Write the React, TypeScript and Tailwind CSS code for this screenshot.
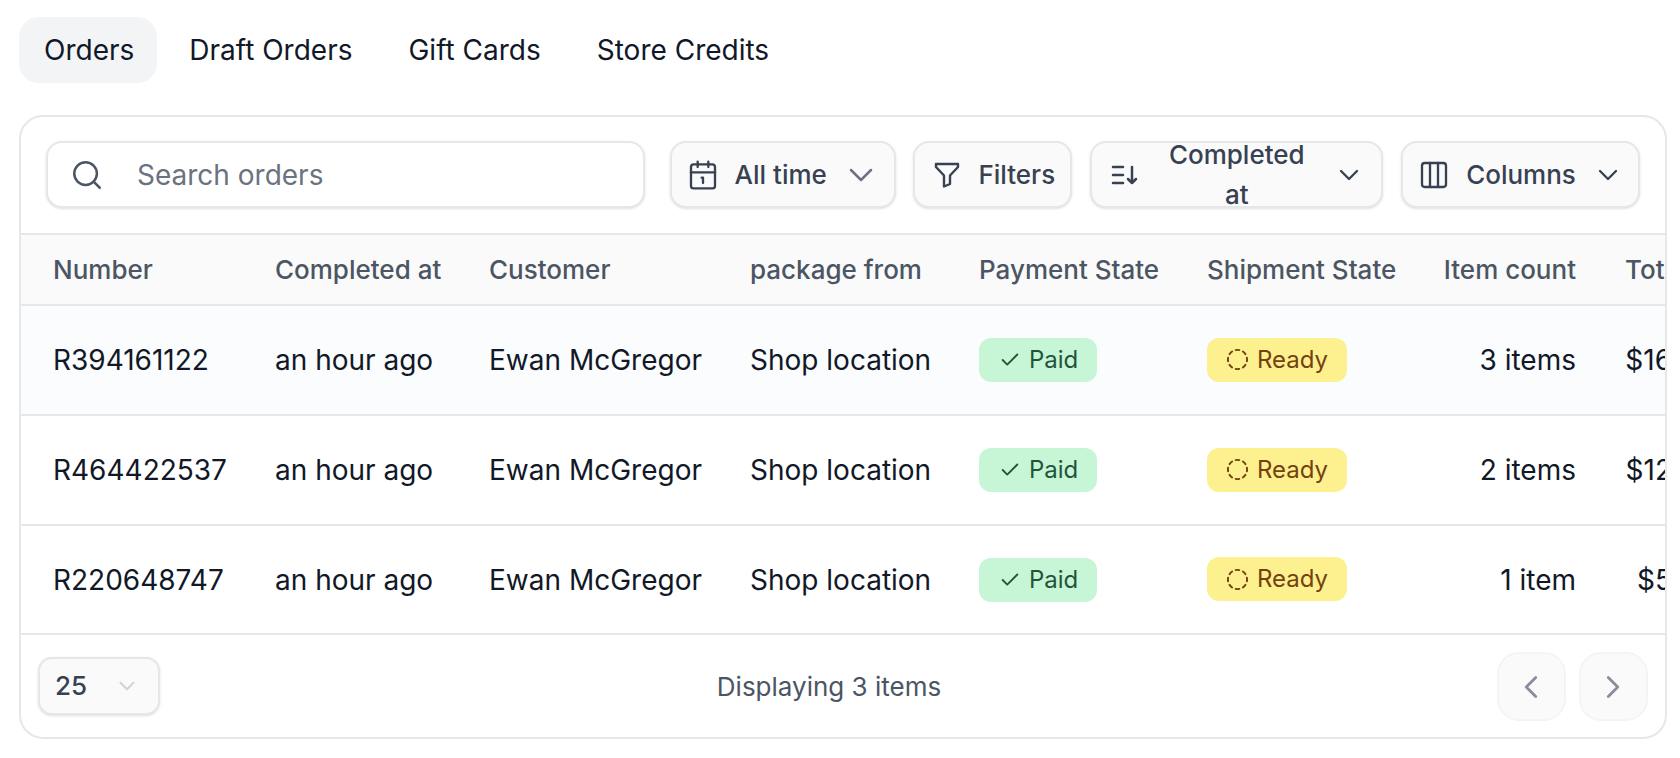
import { Calendar1, Check, ChevronDown, ChevronLeft, ChevronRight, CircleDashed, Columns3, Search } from "lucide-react";

const rows = [
  { number: "R394161122", count: "3 items", total: "$165.00", highlight: true },
  { number: "R464422537", count: "2 items", total: "$125.00", highlight: false },
  { number: "R220648747", count: "1 item", total: "$55.00", highlight: false },
];

const SortIcon = () => (
  <svg viewBox="0 0 30 30" fill="none" stroke="currentColor" strokeWidth="2.5" strokeLinecap="round" strokeLinejoin="round" className="h-[30px] w-[30px] shrink-0">
    <path d="M3 7h10M3 15h10M3 23h10M22 7v16M18 19l4 4 4-4" />
  </svg>
);

const FunnelIcon = () => (
  <svg viewBox="0 0 26 26" fill="none" stroke="currentColor" strokeWidth="2.4" strokeLinecap="round" strokeLinejoin="round" className="h-[26px] w-[26px] shrink-0">
    <path d="M2 2h22v3l-8 8.5V22l-6 2.5v-11L2 5z" />
  </svg>
);

export default function App() {
  return (
    <div className="h-[758px] overflow-hidden bg-white pl-[19px] pr-[13px] pt-[17px] font-['Inter',sans-serif] text-[26px] text-[#111827]">
      {/* Tabs */}
      <nav className="flex h-[66px] items-center text-[28px]">
        <a className="flex h-full items-center rounded-[20px] bg-[#f3f4f6] pl-[25px] pr-[23px]">Orders</a>
        <a className="ml-[4px] flex h-full items-center px-[28px]">Draft Orders</a>
        <a className="flex h-full items-center px-[28px]">Gift Cards</a>
        <a className="flex h-full items-center px-[28px]">Store Credits</a>
      </nav>

      <div className="mt-[32px] h-[624px] overflow-hidden rounded-[24px] border-2 border-[#e5e7eb]">
        {/* Toolbar */}
        <div className="flex h-[116px] items-center px-[25px] pb-[1px] text-[#374151]">
          <div className="flex h-[67px] w-[599px] items-center rounded-[16px] border-2 border-[#e5e7eb] bg-white pl-[22px] text-[28px] shadow-sm">
            <Search className="h-[34px] w-[34px] text-[#4b5563]" strokeWidth={1.75} />
            <span className="ml-[33px] text-[#6b7280]">Search orders</span>
          </div>
          <button className="ml-[25px] flex h-[67px] w-[227px] items-center rounded-[16px] border-2 border-[#e5e7eb] bg-[#fafafa] pl-[15px] font-medium shadow-sm">
            <Calendar1 className="h-8 w-8" strokeWidth={1.75} />
            <span className="ml-[16px]">All time</span>
            <ChevronDown className="ml-[14px] h-10 w-10 text-[#6b7280]" strokeWidth={1.5} />
          </button>
          <button className="ml-[17px] flex h-[67px] w-[159px] items-center rounded-[16px] border-2 border-[#e5e7eb] bg-[#fafafa] pl-[19px] font-medium shadow-sm">
            <FunnelIcon />
            <span className="ml-[18px]">Filters</span>
          </button>
          <button className="ml-[18px] flex h-[67px] w-[293px] items-center rounded-[16px] border-2 border-[#e5e7eb] bg-[#fafafa] pl-[18px] pr-[16px] font-medium leading-[40px] shadow-sm">
            <SortIcon />
            <span className="flex-1 px-[16px] text-center">Completed at</span>
            <ChevronDown className="h-8 w-8" strokeWidth={1.75} />
          </button>
          <button className="ml-[18px] flex h-[67px] w-[239px] items-center rounded-[16px] border-2 border-[#e5e7eb] bg-[#fafafa] pl-[15px] font-medium shadow-sm">
            <Columns3 className="h-8 w-8" strokeWidth={1.75} />
            <span className="ml-[16px]">Columns</span>
            <ChevronDown className="ml-[16px] h-8 w-8" strokeWidth={1.75} />
          </button>
        </div>

        {/* Table */}
        <div className="overflow-hidden">
          <table className="w-[1742px] table-fixed border-collapse text-left">
            <colgroup>
              <col className="w-[222px]" />
              <col className="w-[214px]" />
              <col className="w-[261px]" />
              <col className="w-[229px]" />
              <col className="w-[228px]" />
              <col className="w-[225px]" />
              <col className="w-[208px]" />
              <col className="w-[155px]" />
            </colgroup>
            <thead>
              <tr className="h-[71px] border-y-2 border-[#e5e7eb] bg-[#fafafa] text-[#4b5563]">
                <th className="pl-8 font-medium">Number</th>
                <th className="pl-8 font-medium">Completed at</th>
                <th className="pl-8 font-medium">Customer</th>
                <th className="pl-8 font-medium">package from</th>
                <th className="pl-8 font-medium">Payment State</th>
                <th className="pl-8 font-medium">Shipment State</th>
                <th className="pr-8 text-right font-medium">Item count</th>
                <th className="pl-[17px] font-medium">Total</th>
              </tr>
            </thead>
            <tbody className="text-[28px]">
              {rows.map((row) => (
                <tr key={row.number} className={`h-[110px] border-b-2 border-[#e5e7eb] last:h-[109px] ${row.highlight ? "bg-[#fbfcfe]" : "bg-white"}`}>
                  <td className="pl-8">{row.number}</td>
                  <td className="pl-8">an hour ago</td>
                  <td className="pl-8">Ewan McGregor</td>
                  <td className="pl-8">Shop location</td>
                  <td className="pl-8">
                    <span className="inline-flex h-11 items-center gap-2 rounded-[12px] bg-[#c6f6d5] pl-[20px] pr-[19px] text-[24px] text-[#22543d]">
                      <Check className="h-[22px] w-[22px]" strokeWidth={2} />
                      Paid
                    </span>
                  </td>
                  <td className="pl-8">
                    <span className="inline-flex h-11 items-center gap-2 rounded-[12px] bg-[#fdf08f] pl-[19px] pr-[19px] text-[24px] text-[#744210]">
                      <CircleDashed className="h-[23px] w-[23px]" strokeWidth={2} />
                      Ready
                    </span>
                  </td>
                  <td className="pr-8 text-right">{row.count}</td>
                  <td className="pr-8 text-right">{row.total}</td>
                </tr>
              ))}
            </tbody>
          </table>
        </div>

        {/* Footer */}
        <div className="flex h-[105px] items-center justify-between pb-[2px] pl-[17px] pr-[17px]">
          <div className="mb-[2px] flex h-[58px] w-[122px] items-center justify-between rounded-[14px] border-2 border-[#e5e7eb] bg-[#fafafa] pl-[15px] pr-[18px] font-medium text-[#374151] shadow-sm">
            25
            <ChevronDown className="h-[26px] w-[26px] text-[#d1d5db]" strokeWidth={2} />
          </div>
          <span className="ml-[1px] text-[#4b5563]">Displaying 3 items</span>
          <div className="flex gap-[13px]">
            <button className="flex h-[69px] w-[69px] items-center justify-center rounded-[22px] border-2 border-[#f3f4f6] bg-[#fafafa] text-[#8b8d9b]">
              <ChevronLeft className="h-[38px] w-[38px]" strokeWidth={1.75} />
            </button>
            <button className="flex h-[69px] w-[69px] items-center justify-center rounded-[22px] border-2 border-[#f3f4f6] bg-[#fafafa] text-[#8b8d9b]">
              <ChevronRight className="h-[38px] w-[38px]" strokeWidth={1.75} />
            </button>
          </div>
        </div>
      </div>
    </div>
  );
}
